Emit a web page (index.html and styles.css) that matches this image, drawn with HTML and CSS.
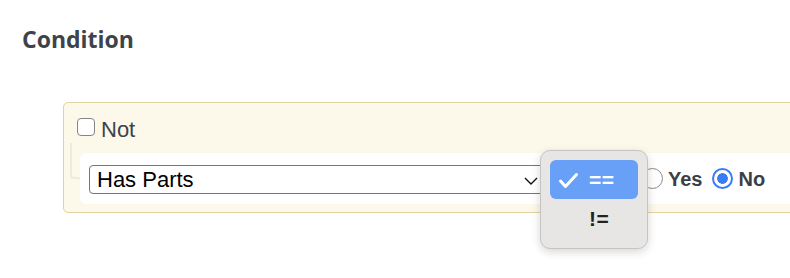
FILE: index.html
```html
<!DOCTYPE html>
<html>
<head>
<meta charset="utf-8">
<link rel="stylesheet" href="styles.css">
</head>
<body>
<h2 class="heading">Condition</h2>
<div class="cond-box">
  <label class="not-row">
    <input type="checkbox" class="check">
    <span class="not-label">Not</span>
  </label>
  <div class="rule-row">
    <div class="select field-select">
      <span>Has Parts</span>
      <svg class="chev" width="14" height="8" viewBox="0 0 14 8"><path d="M1 1 L7 7 L13 1" fill="none" stroke="#111" stroke-width="1.4"/></svg>
    </div>
    <div class="select op-select"><span>==</span></div>
    <label class="radio-opt"><input type="radio" name="v" class="radio"><span class="radio-label">Yes</span></label>
    <label class="radio-opt radio-gap"><input type="radio" name="v" class="radio" checked><span class="radio-label">No</span></label>
    <div class="menu">
      <div class="menu-item active">
        <svg class="tick" width="21" height="17" viewBox="0 0 21 17"><path d="M2.5 9 L7.5 14.5 L18.5 2.5" fill="none" stroke="#fff" stroke-width="3" stroke-linecap="round" stroke-linejoin="round"/></svg>
        <span class="menu-text">==</span>
      </div>
      <div class="menu-item">
        <span class="tick-space"></span>
        <span class="menu-text">!=</span>
      </div>
    </div>
  </div>
</div>
</body>
</html>
```
FILE: styles.css
```css
html, body {
  margin: 0;
  padding: 0;
  background: #ffffff;
  overflow: hidden;
}
body {
  width: 790px;
  height: 278px;
  padding-top: 24px;
  box-sizing: border-box;
}
.heading {
  margin: 0 0 0 22px;
  font-family: "Open Sans", sans-serif;
  font-weight: 700;
  font-size: 23px;
  line-height: 30px;
  color: #3d4449;
}
.cond-box {
  margin: 48px 0 0 63px;
  width: 780px;
  box-sizing: border-box;
  background: #fcf8ea;
  border: 1px solid #e2d3a2;
  border-radius: 5px;
  padding: 14px 0 8px 13px;
}
.not-row {
  display: flex;
  align-items: flex-start;
  height: 25px;
  font-family: "Liberation Sans", Arial, sans-serif;
  font-size: 22px;
  line-height: 25px;
  color: #3d4449;
}
.check {
  appearance: none;
  -webkit-appearance: none;
  margin: 1px 0 0 0;
  width: 18px;
  height: 18px;
  box-sizing: border-box;
  border: 1.5px solid #858585;
  border-radius: 4px;
  background: #fff;
}
.not-label {
  margin-left: 6px;
}
.rule-row {
  position: relative;
  margin: 11px 0 0 3px;
  height: 51px;
  box-sizing: border-box;
  padding: 2px 0 0 9px;
  background: #ffffff;
  border-radius: 6px 0 0 6px;
  display: flex;
  align-items: center;
  font-family: "Liberation Sans", Arial, sans-serif;
}
.rule-row::before {
  content: "";
  position: absolute;
  left: -10px;
  top: -10px;
  width: 8px;
  height: 34px;
  border-left: 2px solid #eeeadc;
  border-bottom: 2px solid #eeeadc;
  border-bottom-left-radius: 4px;
}
.select {
  height: 29px;
  box-sizing: border-box;
  border: 1px solid #767676;
  border-radius: 4px;
  background: #fff;
  display: flex;
  align-items: center;
  justify-content: space-between;
  font-size: 22px;
  color: #000;
}
.field-select {
  width: 457px;
  padding: 0 7px 0 7px;
}
.chev {
  margin-top: 2px;
}
.op-select {
  width: 86px;
  margin-left: 4px;
  padding-left: 8px;
}
.radio-opt {
  display: flex;
  align-items: center;
  margin-left: 6px;
  font-weight: 700;
  font-size: 20px;
  color: #3b4045;
}
.radio-gap {
  margin-left: 10px;
}
.radio {
  appearance: none;
  -webkit-appearance: none;
  margin: -3px 0 0 0;
  width: 21px;
  height: 21px;
  box-sizing: border-box;
  border: 1.5px solid #8a8a8a;
  border-radius: 50%;
  background: #fff;
}
.radio:checked {
  border: 2px solid #3a7bf6;
  background: radial-gradient(circle, #3a7bf6 0 5px, #ffffff 5.6px);
}
.radio-label {
  margin-left: 5px;
}
.menu {
  position: absolute;
  left: 460px;
  top: -3px;
  width: 108px;
  height: 99px;
  box-sizing: border-box;
  padding: 9px 9px;
  background: #e8e6e4;
  border: 1px solid #c6c4c2;
  border-radius: 10px;
  box-shadow: 0 3px 10px rgba(0, 0, 0, 0.16);
  display: flex;
  flex-direction: column;
}
.menu-item {
  height: 39px;
  border-radius: 6px;
  display: flex;
  align-items: center;
  padding-left: 8px;
  font-size: 21px;
  color: #222;
}
.menu-item.active {
  background: #68a0f8;
  color: #fff;
}
.tick {
  width: 21px;
  height: 17px;
  margin-top: 1px;
}
.tick-space {
  width: 21px;
}
.menu-text {
  margin-left: 10px;
  font-weight: 700;
  letter-spacing: 0.5px;
}
```
